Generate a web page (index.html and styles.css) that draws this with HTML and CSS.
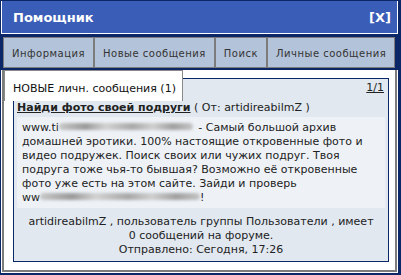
FILE: index.html
```html
<!DOCTYPE html>
<html lang="ru">
<head>
  <meta charset="UTF-8">
  <title>Помощник</title>
  <link rel="stylesheet" href="styles.css">
</head>
<body>
  <div class="window">
    <div class="titlebar">
      <span class="title">Помощник</span>
      <a class="close" href="#">[X]</a>
    </div>
    <div class="tabs">
      <a class="tab" href="#">Информация</a>
      <a class="tab" href="#">Новые сообщения</a>
      <a class="tab" href="#">Поиск</a>
      <a class="tab" href="#">Личные сообщения</a>
    </div>
    <div class="panel">
      <div class="panel-inner">
        <div class="section-label">НОВЫЕ личн. сообщения (1)</div>
        <div class="box">
          <div class="pager"><a href="#">1/1</a></div>
          <div class="subject"><a href="#">Найди фото своей подруги</a> ( От: artidireabilmZ )</div>
          <div class="message">
            www.ti<span class="blur blur-1"></span> - Самый большой архив домашней эротики. 100% настоящие откровенные фото и видео подружек. Поиск своих или чужих подруг. Твоя подруга тоже чья-то бывшая? Возможно её откровенные фото уже есть на этом сайте. Зайди и проверь<br>
            ww<span class="blur blur-2"></span>!
          </div>
          <div class="meta">
            artidireabilmZ , пользователь группы Пользователи , имеет<br>
            0 сообщений на форуме.<br>
            Отправлено: Сегодня, 17:26
          </div>
        </div>
      </div>
    </div>
  </div>
</body>
</html>
```

FILE: styles.css
```css
body {
  margin: 0;
  font-family: "DejaVu Sans", Verdana, sans-serif;
  font-size: 11px;
  color: #222;
}
.window {
  width: 401px;
  height: 275px;
  box-sizing: border-box;
  background-color: #0b2768;
  border-style: solid;
  border-color: #0b2768;
  border-width: 1px 3px 2px 1px;
  display: flex;
  flex-direction: column;
}
.titlebar {
  height: 33px;
  box-sizing: border-box;
  background-color: #3a5db7;
  border: 1px solid #fff;
  border-top: none;
  display: flex;
  justify-content: space-between;
  align-items: center;
  padding: 0 6px 0 11px;
  color: #fff;
  font-size: 13px;
  font-weight: bold;
}
.close {
  color: #fff;
  text-decoration: none;
}
.tabs {
  display: flex;
  padding: 3px 0 2px 2px;
}
.tab {
  height: 31px;
  box-sizing: border-box;
  line-height: 29px;
  padding: 1px 8px 0;
  background-color: #b3c3d9;
  border: 1px solid #7c7c7c;
  color: #333;
  font-size: 10px;
  letter-spacing: 0.5px;
  white-space: nowrap;
  text-decoration: none;
}
.panel {
  flex: 1;
  background-color: #fff;
  border: 1px solid #fff;
  border-top: none;
  display: flex;
}
.panel-inner {
  flex: 1;
  border: 2px solid #7c7c7c;
  border-top: none;
  padding: 0 6px 0 0;
}
.section-label {
  position: relative;
  z-index: 1;
  width: 179px;
  height: 31px;
  box-sizing: border-box;
  padding: 11px 8px 0;
  margin-bottom: -23px;
  background-color: #fff;
  border: 1px solid #8a8a8a;
  border-bottom: none;
  color: #111;
  white-space: nowrap;
}
.box {
  margin-left: 9px;
  border: 1px solid #0b2768;
  background-color: #e1e8f0;
  padding: 2px 3px 4px;
}
.pager {
  text-align: right;
  line-height: 14px;
  padding-right: 1px;
}
.pager a, .subject a {
  color: #222;
}
.subject {
  margin-top: 6px;
  line-height: 14px;
  color: #222;
}
.subject a {
  font-weight: bold;
}
.message {
  margin-top: 2px;
  background-color: #eef2f7;
  padding: 4px 5px 3px;
  line-height: 14px;
  color: #222;
}
.blur {
  display: inline-block;
  height: 7px;
  vertical-align: 1px;
  border-radius: 4px;
  filter: blur(1.6px);
  background: linear-gradient(90deg, #c8c8c8, #9a9a9a 20%, #d2d2d2 35%, #a8a8a8 55%, #cfcfcf 70%, #a0a0a0 85%, #c4c4c4);
}
.blur-1 {
  width: 134px;
  margin-right: 2px;
}
.blur-2 {
  width: 160px;
}
.meta {
  margin-top: 7px;
  text-align: center;
  line-height: 14px;
  color: #222;
}
```
